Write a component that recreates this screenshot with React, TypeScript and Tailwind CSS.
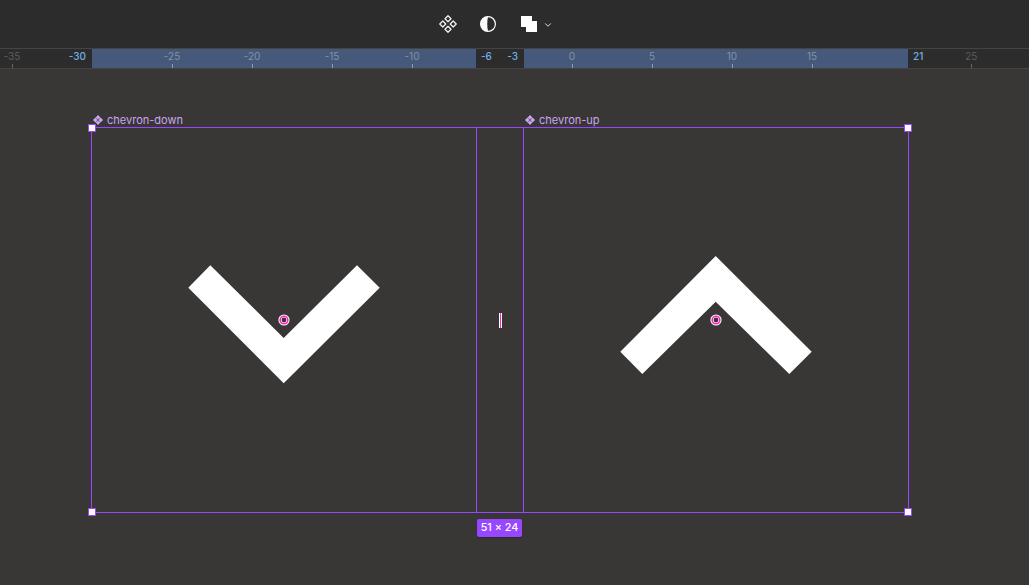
import { ChevronDown } from "lucide-react";

function Tick({ label, dim, width = "w-[80px]" }: { label: number; dim?: boolean; width?: string }) {
  return (
    <div className={`flex h-full flex-col items-center justify-between ${width}`}>
      <span className={dim ? "text-[#5c5c5c]" : "text-[#8391a8]"}>{label}</span>
      <div className={`h-1 w-px ${dim ? "bg-[#666666]" : "bg-[#8f9db3]"}`} />
    </div>
  );
}

function Current({ label }: { label: number }) {
  return <span className="font-medium text-[#6fb1e4]">{label}</span>;
}

function Handle({ className }: { className: string }) {
  return <div className={`absolute h-2 w-2 border border-[#9747ff] bg-white ${className}`} />;
}

function FrameLabel({ name, className }: { name: string; className?: string }) {
  return (
    <div className={`flex items-center gap-1 text-[11px] leading-[14px] text-[#c9a5ef] ${className ?? ""}`}>
      <svg width="10" height="10" viewBox="0 0 10 10" fill="#c9a5ef" className="shrink-0">
        <path d="M5 0 7.4 2.4 5 4.6 2.6 2.4zM2.4 2.6 4.6 5 2.4 7.4 0 5zM7.6 2.6 10 5 7.6 7.4 5.4 5zM5 5.4 7.4 7.6 5 10 2.6 7.6z" />
      </svg>
      {name}
    </div>
  );
}

function Origin() {
  return (
    <svg width="12" height="12" viewBox="0 0 12 12" className="[grid-area:1/1]">
      <circle cx="6" cy="6" r="5.6" fill="#fff" />
      <circle cx="6" cy="6" r="4.6" fill="#ff24bd" />
      <circle cx="6" cy="6" r="3" fill="#fff" />
      <circle cx="6" cy="6" r="2.4" fill="#383735" />
    </svg>
  );
}

function IconFrame({ points }: { points: string }) {
  return (
    <div className="grid w-[384px] place-items-center">
      <svg viewBox="0 0 384 384" width="384" height="384" fill="#fff" className="[grid-area:1/1]">
        <path d={points} />
      </svg>
      <Origin />
    </div>
  );
}

function Toolbar() {
  return (
    <div className="flex h-[48px] items-center bg-[#2c2c2c] pl-[439px]">
      <svg width="18" height="18" viewBox="0 0 18 18" fill="none" stroke="#f0f0f0" strokeWidth="1.3" strokeLinejoin="round">
        <path d="M9 .8 12 3.8 9 6.8 6 3.8zM3.8 6 6.8 9 3.8 12 .8 9zM14.2 6 17.2 9 14.2 12 11.2 9zM9 11.2 12 14.2 9 17.2 6 14.2z" />
      </svg>
      <svg width="16" height="16" viewBox="0 0 16 16" className="ml-[23px]">
        <circle cx="8" cy="8" r="7.4" fill="none" stroke="#fff" strokeWidth="1.2" />
        <path d="M8 .6A7.4 7.4 0 0 0 8 15.4C7 11 7 5 8 .6z" fill="#fff" />
      </svg>
      <div className="relative ml-[25px] h-4 w-4">
        <div className="h-[11px] w-[11px] bg-white" />
        <div className="absolute left-[5px] top-[5px] h-[11px] w-[11px] bg-white" />
      </div>
      <ChevronDown size={10} strokeWidth={2.2} color="#f0f0f0" className="ml-[6px] mt-0.5" />
    </div>
  );
}

function Ruler() {
  return (
    <div className="flex h-[21px] border-y border-[#444444] bg-[#2c2c2c] text-[10px] leading-[14px]">
      <div className="flex w-[92px] pr-[6px]">
        <Tick label={-35} dim width="w-[24px]" />
        <div className="ml-auto">
          <Current label={-30} />
        </div>
      </div>
      <div className="flex w-[384px] bg-[#47597a] pl-[40px]">
        <Tick label={-25} />
        <Tick label={-20} />
        <Tick label={-15} />
        <Tick label={-10} />
      </div>
      <div className="flex w-[48px] justify-between pl-[5px] pr-[6px]">
        <Current label={-6} />
        <Current label={-3} />
      </div>
      <div className="flex w-[384px] bg-[#47597a] pl-[8px]">
        <Tick label={0} />
        <Tick label={5} />
        <Tick label={10} />
        <Tick label={15} />
      </div>
      <div className="flex flex-1 pl-[5px]">
        <Current label={21} />
        <div className="ml-[28px]">
          <Tick label={25} dim width="w-[40px]" />
        </div>
      </div>
    </div>
  );
}

export default function App() {
  return (
    <div className="h-[585px] w-[1029px] overflow-hidden bg-[#383735] font-['Inter',sans-serif]">
      <Toolbar />
      <Ruler />

      <div className="ml-[91px] mt-[44px] w-[818px]">
        <div className="flex h-[14px] pl-[2px]">
          <FrameLabel name="chevron-down" className="w-[432px]" />
          <FrameLabel name="chevron-up" />
        </div>

        <div className="relative flex h-[386px] border border-[#9747ff]">
          <IconFrame points="M96.3 159.7 118.3 137.3 191.7 210 265 137.3 287.7 159.7 191.7 255.3z" />
          <div className="flex w-[48px] items-center justify-center border-x border-[#9747ff]">
            <div className="ml-px h-[15px] w-[3px] border-x border-white bg-[#ff24bd]" />
          </div>
          <IconFrame points="M96.3 223.7 118.3 246 191.7 173.7 265.3 246 287.7 223.7 191.7 128z" />

          <Handle className="-left-1 -top-1" />
          <Handle className="-right-1 -top-1" />
          <Handle className="-bottom-1 -left-1" />
          <Handle className="-bottom-1 -right-1" />
        </div>

        <div className="ml-[386px] mt-[6px] flex h-[18px] w-[45px] items-center justify-center rounded-[2px] bg-[#9747ff] text-[10.8px] font-medium text-white shadow-[0_1px_1px_rgba(0,0,0,0.25)]">
          51 × 24
        </div>
      </div>
    </div>
  );
}
